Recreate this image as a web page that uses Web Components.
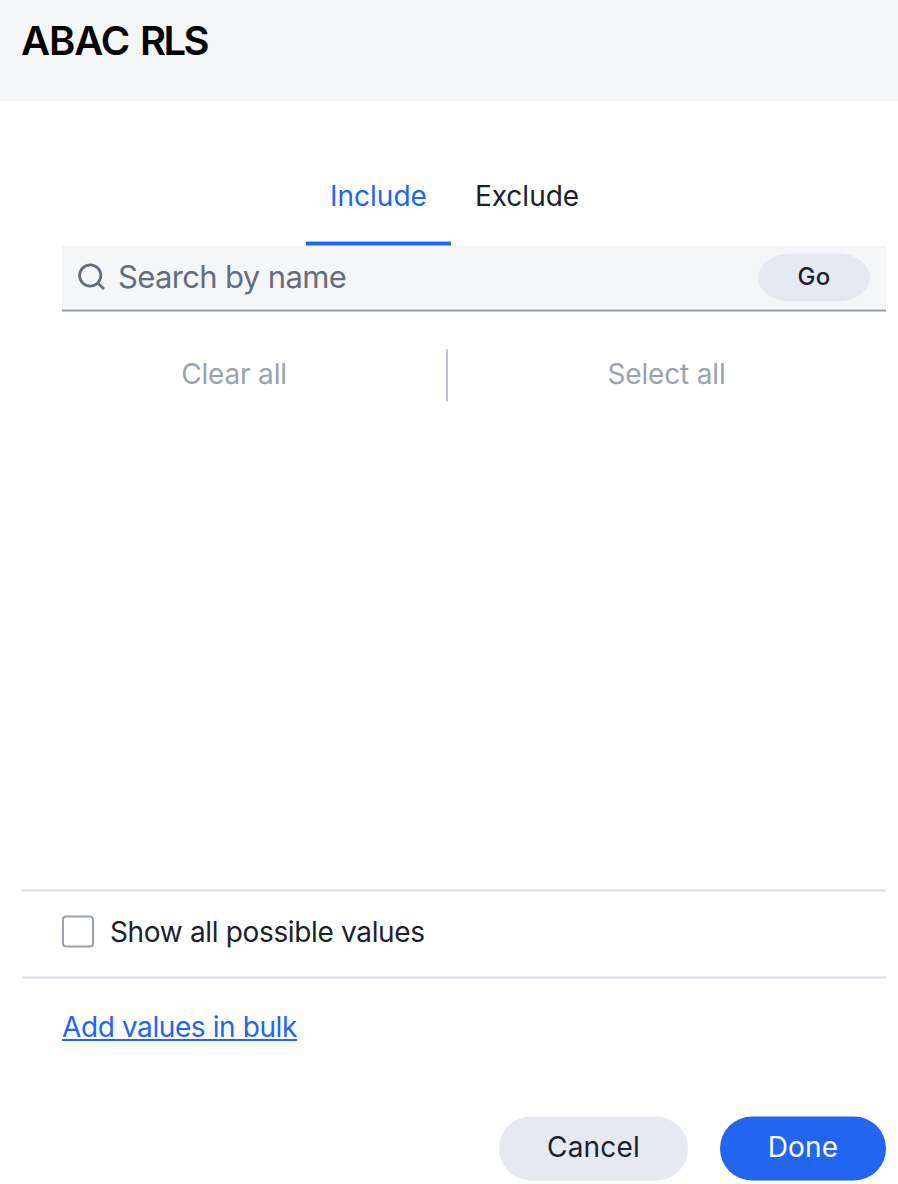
<!DOCTYPE html>
<html lang="en"><head><meta charset="utf-8"><title>ABAC RLS</title>
<style>body{margin:0;background:#fff;font-family:Inter,"Liberation Sans",sans-serif;color:#1a212e;overflow:hidden}</style></head><body>
<filter-dialog></filter-dialog>
<script>
const define=(name,html)=>customElements.define(name,class extends HTMLElement{
  constructor(){super();this.attachShadow({mode:'open'}).innerHTML=html}
});
define('dialog-header',`<style>:host{display:block;box-sizing:border-box;height:101px;padding:17px 21px;background:#f5f6f8;color:#000;font-size:40px;line-height:48px;font-weight:600;letter-spacing:-1.1px}::slotted(.code){letter-spacing:-2.6px;margin-left:2px}</style><slot></slot>`);
define('tab-item',`<style>:host{display:block;box-sizing:border-box;height:85px;padding:17px 24px 0;font-size:28px;line-height:36px;white-space:nowrap}
:host([selected]){color:#2265ee;background:linear-gradient(#9bb8f6 0 1px,#2265ee 1px 4px,#8eb0f5 4px) bottom/100% 5px no-repeat}</style><slot></slot>`);
define('pill-button',`<style>:host{display:grid;place-items:center;flex:none;fill:#e6e9f1}:host([primary]){fill:#2265ee;color:#fff}
svg{width:100%;height:100%;grid-area:1/1;display:block}span{grid-area:1/1;z-index:1;white-space:nowrap;padding-bottom:3px}</style><svg><rect y=".5" width="100%" height="100%" style="height:calc(100% - 1px)" rx="32"/></svg><span><slot></slot></span>`);
define('search-bar',`<style>:host{display:flex;align-items:flex-start;box-sizing:border-box;height:66px;padding:0 16px;background:linear-gradient(#cbcfd7 0 1px,#959dac 1px 2px,#c5cad3 2px) bottom/100% 3px no-repeat,#f5f6f8;color:#656e7e}
svg{margin:17px 12px 0 0;width:28px;height:28px;flex:none}.t{flex:1;font-size:31px;line-height:40px;margin-top:11px;letter-spacing:-.64px}pill-button{width:112px;height:49px;margin-top:7px;font-size:24px;font-weight:500;color:#1a212e;letter-spacing:.4px}</style>
<svg viewBox="0 0 28 28" fill="none" stroke="currentColor" stroke-width="2.8"><circle cx="12.2" cy="12.5" r="10.6"/><path d="M19.5 19.8l6.5 6.2"/></svg><span class="t"><slot></slot></span><pill-button><span>Go</span></pill-button>`);
define('bulk-actions',`<style>:host{display:grid;grid-template-columns:344px 40px 2px 1fr 0;height:53px;font-size:28px;line-height:36px;color:#99a2b1;text-align:center;letter-spacing:-.17px}
i{grid-column:3;background:linear-gradient(#dde0e5 0 1px,#b9c0cb 1px 52px,#dde0e5 52px)}::slotted(*){padding-top:7px}</style><slot name="clear"></slot><i></i><slot name="select"></slot>`);
define('check-row',`<style>:host{display:flex;box-sizing:border-box;height:90px;padding:26px 40px 0;font-size:28px;line-height:36px;background:linear-gradient(#eceef3 0 1px,#d6dae3 1px 2px,#eceef3 2px) top/100% 3px no-repeat,linear-gradient(#eceef3 0 1px,#d6dae3 1px 2px,#eceef3 2px) bottom/100% 3px no-repeat}
svg{width:32px;height:33px;margin-right:16px;flex:none}span{letter-spacing:-.34px;white-space:nowrap;margin-top:-1px}</style><svg><rect x="1" y="1.5" width="30" height="30" rx="3" fill="#fff" stroke="#99a2b1" stroke-width="2"/></svg><span><slot></slot></span>`);
define('text-link',`<style>:host{display:block}a{font-size:28px;line-height:36px;color:#2265ee;letter-spacing:-.4px;text-decoration:underline;text-decoration-thickness:2px;text-underline-offset:2px;text-decoration-skip-ink:none}</style><a><slot></slot></a>`);
define('filter-dialog',`<style>:host{display:flex;flex-direction:column;height:1184px}
.tabs{display:flex;margin:60px 0 0 306px}search-bar{margin:0 12px 0 62px}bulk-actions{margin:37px 12px 0 62px}bulk-actions [slot=select]{grid-column:4;margin-right:1px}
check-row{margin:487px 12px 0 22px}text-link{margin:30px 0 0 62px}
.foot{display:flex;justify-content:flex-end;gap:32px;margin:auto 12px 3px 0}.foot pill-button{width:189px;height:65px;font-size:28px;letter-spacing:.2px}.foot pill-button[primary]{width:166px}</style>
<dialog-header>ABAC <span class="code">RLS</span></dialog-header>
<div class="tabs"><tab-item selected><span>Include</span></tab-item><tab-item><span>Exclude</span></tab-item></div>
<search-bar><span>Search by name</span></search-bar>
<bulk-actions><span slot="clear">Clear all</span><span slot="select">Select all</span></bulk-actions>
<check-row><span>Show all possible values</span></check-row>
<text-link><span>Add values in bulk</span></text-link>
<div class="foot"><pill-button><span>Cancel</span></pill-button><pill-button primary><span>Done</span></pill-button></div>`);
</script></body></html>
